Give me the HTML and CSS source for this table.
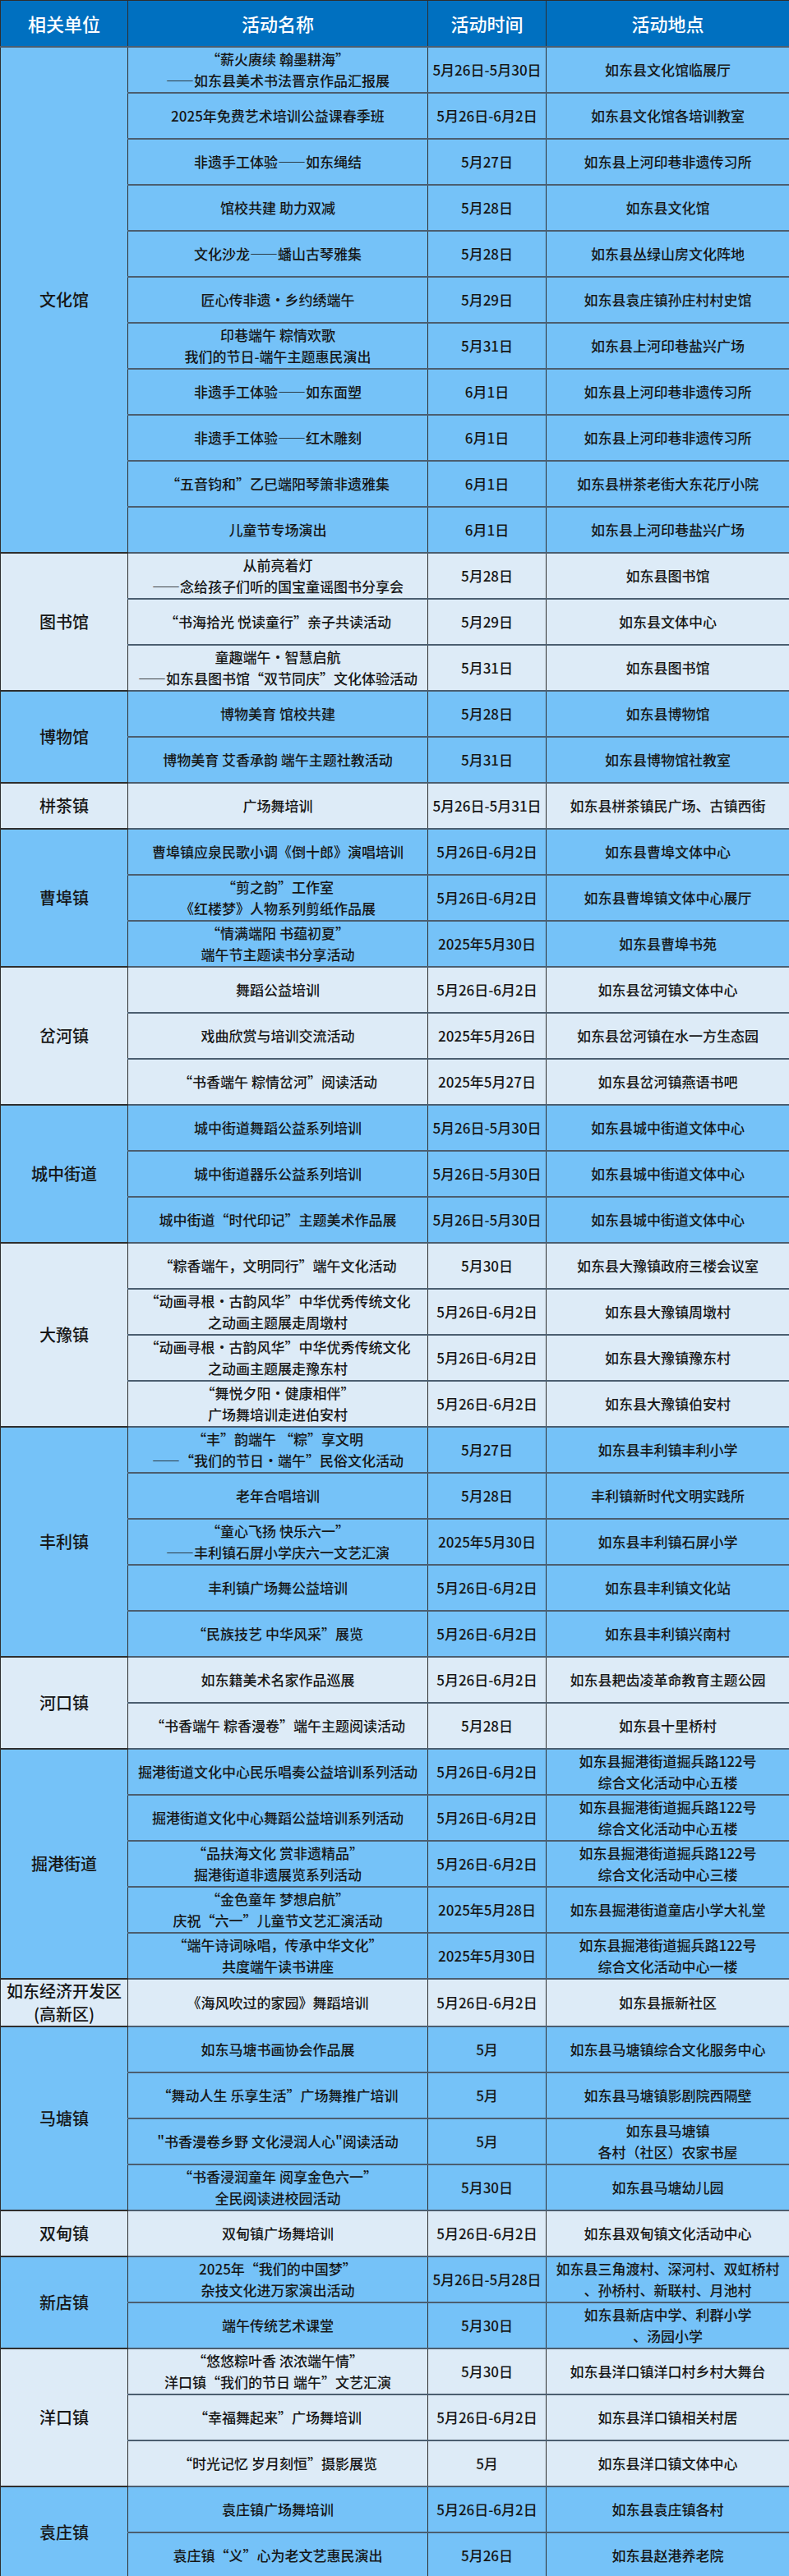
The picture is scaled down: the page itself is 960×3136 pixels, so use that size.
FILE: index.html
```html
<!DOCTYPE html>
<html lang="zh-CN">
<head>
<meta charset="utf-8">
<title>活动安排表</title>
<link rel="stylesheet" href="styles.css">
</head>
<body>
<table class="sched">
<colgroup><col class="c-unit"><col class="c-name"><col class="c-time"><col class="c-place"></colgroup>
<thead>
<tr class="head"><th>相关单位</th><th>活动名称</th><th>活动时间</th><th>活动地点</th></tr>
</thead>
<tbody>
<tr class="b"><td class="unit" rowspan="11">文化馆</td><td>“薪火赓续 翰墨耕海”<br>——如东县美术书法晋京作品汇报展</td><td>5月26日-5月30日</td><td>如东县文化馆临展厅</td></tr>
<tr class="b"><td>2025年免费艺术培训公益课春季班</td><td>5月26日-6月2日</td><td>如东县文化馆各培训教室</td></tr>
<tr class="b"><td>非遗手工体验——如东绳结</td><td>5月27日</td><td>如东县上河印巷非遗传习所</td></tr>
<tr class="b"><td>馆校共建 助力双减</td><td>5月28日</td><td>如东县文化馆</td></tr>
<tr class="b"><td>文化沙龙——蟠山古琴雅集</td><td>5月28日</td><td>如东县丛绿山房文化阵地</td></tr>
<tr class="b"><td>匠心传非遗·乡约绣端午</td><td>5月29日</td><td>如东县袁庄镇孙庄村村史馆</td></tr>
<tr class="b"><td>印巷端午 粽情欢歌<br>我们的节日-端午主题惠民演出</td><td>5月31日</td><td>如东县上河印巷盐兴广场</td></tr>
<tr class="b"><td>非遗手工体验——如东面塑</td><td>6月1日</td><td>如东县上河印巷非遗传习所</td></tr>
<tr class="b"><td>非遗手工体验——红木雕刻</td><td>6月1日</td><td>如东县上河印巷非遗传习所</td></tr>
<tr class="b"><td>“五音钧和”乙巳端阳琴箫非遗雅集</td><td>6月1日</td><td>如东县栟茶老街大东花厅小院</td></tr>
<tr class="b"><td>儿童节专场演出</td><td>6月1日</td><td>如东县上河印巷盐兴广场</td></tr>

<tr class="p"><td class="unit" rowspan="3">图书馆</td><td>从前亮着灯<br>——念给孩子们听的国宝童谣图书分享会</td><td>5月28日</td><td>如东县图书馆</td></tr>
<tr class="p"><td>“书海拾光 悦读童行”亲子共读活动</td><td>5月29日</td><td>如东县文体中心</td></tr>
<tr class="p"><td>童趣端午·智慧启航<br>——如东县图书馆“双节同庆”文化体验活动</td><td>5月31日</td><td>如东县图书馆</td></tr>

<tr class="b"><td class="unit" rowspan="2">博物馆</td><td>博物美育 馆校共建</td><td>5月28日</td><td>如东县博物馆</td></tr>
<tr class="b"><td>博物美育 艾香承韵 端午主题社教活动</td><td>5月31日</td><td>如东县博物馆社教室</td></tr>

<tr class="p"><td class="unit">栟茶镇</td><td>广场舞培训</td><td>5月26日-5月31日</td><td>如东县栟茶镇民广场、古镇西街</td></tr>

<tr class="b"><td class="unit" rowspan="3">曹埠镇</td><td>曹埠镇应泉民歌小调《倒十郎》演唱培训</td><td>5月26日-6月2日</td><td>如东县曹埠文体中心</td></tr>
<tr class="b"><td>“剪之韵”工作室<br>《红楼梦》人物系列剪纸作品展</td><td>5月26日-6月2日</td><td>如东县曹埠镇文体中心展厅</td></tr>
<tr class="b"><td>“情满端阳 书蕴初夏”<br>端午节主题读书分享活动</td><td>2025年5月30日</td><td>如东县曹埠书苑</td></tr>

<tr class="p"><td class="unit" rowspan="3">岔河镇</td><td>舞蹈公益培训</td><td>5月26日-6月2日</td><td>如东县岔河镇文体中心</td></tr>
<tr class="p"><td>戏曲欣赏与培训交流活动</td><td>2025年5月26日</td><td>如东县岔河镇在水一方生态园</td></tr>
<tr class="p"><td>“书香端午 粽情岔河”阅读活动</td><td>2025年5月27日</td><td>如东县岔河镇燕语书吧</td></tr>

<tr class="b"><td class="unit" rowspan="3">城中街道</td><td>城中街道舞蹈公益系列培训</td><td>5月26日-5月30日</td><td>如东县城中街道文体中心</td></tr>
<tr class="b"><td>城中街道器乐公益系列培训</td><td>5月26日-5月30日</td><td>如东县城中街道文体中心</td></tr>
<tr class="b"><td>城中街道“时代印记”主题美术作品展</td><td>5月26日-5月30日</td><td>如东县城中街道文体中心</td></tr>

<tr class="p"><td class="unit" rowspan="4">大豫镇</td><td>“粽香端午，文明同行”端午文化活动</td><td>5月30日</td><td>如东县大豫镇政府三楼会议室</td></tr>
<tr class="p"><td>“动画寻根·古韵风华”中华优秀传统文化<br>之动画主题展走周墩村</td><td>5月26日-6月2日</td><td>如东县大豫镇周墩村</td></tr>
<tr class="p"><td>“动画寻根·古韵风华”中华优秀传统文化<br>之动画主题展走豫东村</td><td>5月26日-6月2日</td><td>如东县大豫镇豫东村</td></tr>
<tr class="p"><td>“舞悦夕阳·健康相伴”<br>广场舞培训走进伯安村</td><td>5月26日-6月2日</td><td>如东县大豫镇伯安村</td></tr>

<tr class="b"><td class="unit" rowspan="5">丰利镇</td><td>“丰”韵端午 “粽”享文明<br>——“我们的节日·端午”民俗文化活动</td><td>5月27日</td><td>如东县丰利镇丰利小学</td></tr>
<tr class="b"><td>老年合唱培训</td><td>5月28日</td><td>丰利镇新时代文明实践所</td></tr>
<tr class="b"><td>“童心飞扬 快乐六一”<br>——丰利镇石屏小学庆六一文艺汇演</td><td>2025年5月30日</td><td>如东县丰利镇石屏小学</td></tr>
<tr class="b"><td>丰利镇广场舞公益培训</td><td>5月26日-6月2日</td><td>如东县丰利镇文化站</td></tr>
<tr class="b"><td>“民族技艺 中华风采”展览</td><td>5月26日-6月2日</td><td>如东县丰利镇兴南村</td></tr>

<tr class="p"><td class="unit" rowspan="2">河口镇</td><td>如东籍美术名家作品巡展</td><td>5月26日-6月2日</td><td>如东县耙齿凌革命教育主题公园</td></tr>
<tr class="p"><td>“书香端午 粽香漫卷”端午主题阅读活动</td><td>5月28日</td><td>如东县十里桥村</td></tr>

<tr class="b"><td class="unit" rowspan="5">掘港街道</td><td>掘港街道文化中心民乐唱奏公益培训系列活动</td><td>5月26日-6月2日</td><td>如东县掘港街道掘兵路122号<br>综合文化活动中心五楼</td></tr>
<tr class="b"><td>掘港街道文化中心舞蹈公益培训系列活动</td><td>5月26日-6月2日</td><td>如东县掘港街道掘兵路122号<br>综合文化活动中心五楼</td></tr>
<tr class="b"><td>“品扶海文化 赏非遗精品”<br>掘港街道非遗展览系列活动</td><td>5月26日-6月2日</td><td>如东县掘港街道掘兵路122号<br>综合文化活动中心三楼</td></tr>
<tr class="b"><td>“金色童年 梦想启航”<br>庆祝“六一”儿童节文艺汇演活动</td><td>2025年5月28日</td><td>如东县掘港街道童店小学大礼堂</td></tr>
<tr class="b"><td>“端午诗词咏唱，传承中华文化”<br>共度端午读书讲座</td><td>2025年5月30日</td><td>如东县掘港街道掘兵路122号<br>综合文化活动中心一楼</td></tr>

<tr class="p"><td class="unit">如东经济开发区<br>(高新区)</td><td>《海风吹过的家园》舞蹈培训</td><td>5月26日-6月2日</td><td>如东县振新社区</td></tr>

<tr class="b"><td class="unit" rowspan="4">马塘镇</td><td>如东马塘书画协会作品展</td><td>5月</td><td>如东县马塘镇综合文化服务中心</td></tr>
<tr class="b"><td>“舞动人生 乐享生活”广场舞推广培训</td><td>5月</td><td>如东县马塘镇影剧院西隔壁</td></tr>
<tr class="b"><td>"书香漫卷乡野 文化浸润人心"阅读活动</td><td>5月</td><td>如东县马塘镇<br>各村（社区）农家书屋</td></tr>
<tr class="b"><td>“书香浸润童年 阅享金色六一”<br>全民阅读进校园活动</td><td>5月30日</td><td>如东县马塘幼儿园</td></tr>

<tr class="p"><td class="unit">双甸镇</td><td>双甸镇广场舞培训</td><td>5月26日-6月2日</td><td>如东县双甸镇文化活动中心</td></tr>

<tr class="b"><td class="unit" rowspan="2">新店镇</td><td>2025年“我们的中国梦”<br>杂技文化进万家演出活动</td><td>5月26日-5月28日</td><td>如东县三角渡村、深河村、双虹桥村<br>、孙桥村、新联村、月池村</td></tr>
<tr class="b"><td>端午传统艺术课堂</td><td>5月30日</td><td>如东县新店中学、利群小学<br>、汤园小学</td></tr>

<tr class="p"><td class="unit" rowspan="3">洋口镇</td><td>“悠悠粽叶香 浓浓端午情”<br>洋口镇“我们的节日 端午”文艺汇演</td><td>5月30日</td><td>如东县洋口镇洋口村乡村大舞台</td></tr>
<tr class="p"><td>“幸福舞起来”广场舞培训</td><td>5月26日-6月2日</td><td>如东县洋口镇相关村居</td></tr>
<tr class="p"><td>“时光记忆 岁月刻恒”摄影展览</td><td>5月</td><td>如东县洋口镇文体中心</td></tr>

<tr class="b"><td class="unit" rowspan="2">袁庄镇</td><td>袁庄镇广场舞培训</td><td>5月26日-6月2日</td><td>如东县袁庄镇各村</td></tr>
<tr class="b"><td>袁庄镇“义”心为老文艺惠民演出</td><td>5月26日</td><td>如东县赵港养老院</td></tr>
</tbody>
</table>
</body>
</html>
```
FILE: styles.css
```css
html, body {
  margin: 0;
  padding: 0;
  background: #ffffff;
}

body {
  font-family: "Noto Sans CJK SC", "Noto Sans", "Liberation Sans", sans-serif;
  color: #161616;
}

.sched {
  width: 960px;
  border-collapse: collapse;
  table-layout: fixed;
}

.c-unit { width: 155px; }
.c-name { width: 365px; }
.c-time { width: 144px; }
.c-place { width: 296px; }

.sched th,
.sched td {
  padding: 0;
  text-align: center;
  vertical-align: middle;
  border-left: 1px solid #2e2e2e;
  border-right: 1px solid #2e2e2e;
  border-top: 2px solid #4b5e70;
  border-bottom: 2px solid #4b5e70;
  font-size: 17px;
  font-weight: 500;
  line-height: 26px;
  white-space: nowrap;
}

.sched tr {
  height: 56px;
}

.head th {
  background: #0070c0;
  color: #ffffff;
  font-size: 22px;
  font-weight: 500;
  border-top: 1px solid #2e2e2e;
}

.b {
  background: #75c2f8;
}

.p {
  background: #ddebf7;
}

.sched td.unit {
  font-size: 20px;
  line-height: 28px;
}

.sched tbody tr:last-child td,
.sched td.unit {
  border-bottom: 2px solid #2e2e2e;
}
```
